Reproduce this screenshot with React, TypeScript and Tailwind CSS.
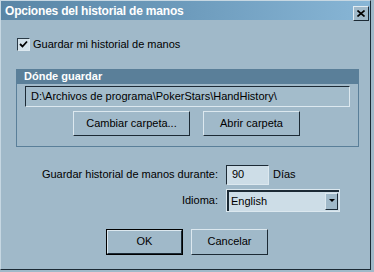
import { useState } from "react"

const font = { fontFamily: '"Liberation Sans", Arial, sans-serif' }

function Btn({ label, isDefault = false, className = "" }: { label: string; isDefault?: boolean; className?: string }) {
  return (
    <button
      className={`${isDefault ? "border border-black" : ""} h-[25px] bg-[#a0b9c9] p-0 ${className}`}
    >
      <span className="flex h-full w-full items-center justify-center border-t border-l border-t-[#dce8ef] border-l-[#dce8ef] border-r border-b border-r-[#1c2a35] border-b-[#1c2a35] text-[11px] text-black">
        {label}
      </span>
    </button>
  )
}

export default function App() {
  const [keep, setKeep] = useState(true)

  return (
    <div className="h-[272px] w-[374px] bg-[#a0b9c9]" style={font}>
      <div className="flex h-[270px] w-[371px] flex-col border-t border-l border-r border-b border-t-[#c6d7e2] border-l-[#c6d7e2] border-r-[#1c2a35] border-b-[#1c2a35] bg-[#a0b9c9]">
        {/* title bar */}
        <div className="flex h-[19px] items-center justify-between bg-gradient-to-r from-[#5a86a6] via-[#6d9bbc] to-[#88b6d6] pl-[4px] pr-[1px]">
          <span className="text-[12px] font-bold tracking-[-0.2px] text-white">Opciones del historial de manos</span>
          <button className="mt-[5px] flex h-[15px] w-[16px] items-center justify-center border-t border-l border-t-[#e2ecf2] border-l-[#e2ecf2] border-r border-b border-r-[#1c2a35] border-b-[#1c2a35] bg-[#a0b9c9] p-0">
            <svg width="8" height="7" viewBox="0 0 8 7">
              <path d="M0.5 0.5 L7.5 6.5 M7.5 0.5 L0.5 6.5" stroke="#000" strokeWidth="1.6" />
            </svg>
          </button>
        </div>

        {/* checkbox */}
        <label className="ml-[16px] mt-[16px] flex items-center gap-[3px] text-[11px] text-black" onClick={() => setKeep(!keep)}>
          <span className="flex h-[13px] w-[13px] items-center justify-center border-t border-l border-t-[#2a3a46] border-l-[#2a3a46] border-r border-b border-r-[#dce8ef] border-b-[#dce8ef] bg-[#d4e2ea]">
            {keep && (
              <svg width="9" height="9" viewBox="0 0 9 9">
                <path d="M1 4 L3.5 6.5 L8 1.5" fill="none" stroke="#000" strokeWidth="1.8" />
              </svg>
            )}
          </span>
          <span>Guardar mi historial de manos</span>
        </label>

        {/* group box */}
        <div className="ml-[15px] mt-[16px] w-[343px] border-l border-r border-b border-[#5a7f99]">
          <div className="flex h-[15px] items-center bg-[#5a7f99] pl-[7px] text-[11px] font-bold text-white">Dónde guardar</div>
          <div className="mx-[8px] mt-[2px] flex h-[21px] items-center border-t border-l border-t-[#1c2a35] border-l-[#1c2a35] border-r border-b border-r-[#dce8ef] border-b-[#dce8ef] bg-[#a3bccb] pl-[5px] text-[11px] text-black">
            D:\Archivos de programa\PokerStars\HandHistory\
          </div>
          <div className="mt-[4px] flex gap-[13px] pl-[56px]">
            <Btn label="Cambiar carpeta..." className="w-[117px]" />
            <Btn label="Abrir carpeta" className="w-[97px]" />
          </div>
          <div className="h-[10px]" />
        </div>

        {/* days */}
        <div className="mt-[18px] grid grid-cols-[217px_auto] items-center gap-x-[8px] gap-y-[4px] text-[11px] text-black">
          <span className="text-right">Guardar historial de manos durante:</span>
          <div className="flex items-center gap-[4px]">
            <div className="flex h-[20px] w-[43px] items-center border-t border-l border-t-[#1c2a35] border-l-[#1c2a35] border-r border-b border-r-[#dce8ef] border-b-[#dce8ef] bg-[#cddde7] pl-[5px]">90</div>
            <span>Días</span>
          </div>
          <span className="text-right">Idioma:</span>
          <div className="flex h-[23px] w-[114px] items-center border border-[#dce8ef]">
            <div className="flex h-full flex-1 items-center border-t-2 border-l-2 border-t-[#1c2a35] border-l-[#1c2a35] bg-[#cddde7] pl-[2px]">English</div>
            <div className="flex h-full w-[14px] items-center justify-center border-t-2 border-t-[#1c2a35] bg-[#cddde7] py-[1px] pr-[1px]">
              <div className="flex h-full w-full items-center justify-center border-t border-l border-t-[#dce8ef] border-l-[#dce8ef] border-r border-b border-r-[#1c2a35] border-b-[#1c2a35] bg-[#a0b9c9]">
                <svg width="6" height="4" viewBox="0 0 6 4">
                  <path d="M0 0 H6 L3 3 Z" fill="#000" />
                </svg>
              </div>
            </div>
          </div>
        </div>

        {/* actions */}
        <div className="mt-[17px] flex gap-[8px] pl-[105px]">
          <Btn label="OK" isDefault className="w-[77px] !h-[26px]" />
          <Btn label="Cancelar" className="w-[77px] !h-[26px]" />
        </div>
      </div>
    </div>
  )
}
